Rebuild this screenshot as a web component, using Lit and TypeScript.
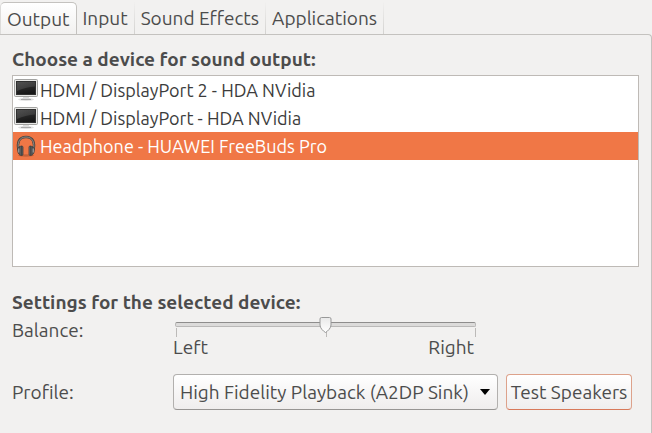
import { LitElement, html, css, svg } from "lit";
import { customElement, property, state } from "lit/decorators.js";
import { classMap } from "lit/directives/class-map.js";

@customElement("device-icon")
class DeviceIcon extends LitElement {
  @property() kind = "monitor";

  static styles = css`
    :host { display: block; width: 24px; height: 24px; flex: none; }
    svg { display: block; }
  `;

  render() {
    return html`<svg width="24" height="24" viewBox="0 0 24 24" aria-hidden="true">
      ${this.kind === "monitor" ? this.monitor() : this.headphones()}
    </svg>`;
  }

  monitor() {
    return svg`
      <defs>
        <linearGradient id="screen" x1="0" y1="0" x2="0.3" y2="1">
          <stop offset="0" stop-color="#3a3a3a"/><stop offset="1" stop-color="#181818"/>
        </linearGradient>
        <linearGradient id="shine" x1="0" y1="0" x2="1" y2="0.6">
          <stop offset="0" stop-color="#888" stop-opacity=".3"/><stop offset="1" stop-color="#888" stop-opacity=".2"/>
        </linearGradient>
      </defs>
      <ellipse cx="12" cy="21.5" rx="8" ry="1.5" fill="#000" opacity=".12"/>
      <path d="M9 18h6v2l1.500 1H7.500L9 20z" fill="#dcdcdc"/>
      <path d="M7 21h10v1H7z" fill="#a8a8a8"/>
      <rect x="0.5" y="1.5" width="23" height="17" rx="1" fill="#e8e8e6" stroke="#a2a2a0"/>
      <rect x="2.5" y="3.5" width="19" height="13" fill="url(#screen)" stroke="#303030"/>
      <path d="M3 4h18v4.500C14 9 9 10.500 3 13z" fill="url(#shine)"/>
    `;
  }

  headphones() {
    return svg`
      <defs>
        <linearGradient id="cup" x1="0" y1="0" x2="1" y2="0">
          <stop offset="0" stop-color="#888"/><stop offset=".5" stop-color="#484848"/><stop offset="1" stop-color="#707070"/>
        </linearGradient>
      </defs>
      <ellipse cx="12" cy="21.500" rx="8" ry="1.200" fill="#000" opacity=".18"/>
      <path d="M4.500 16C3 9 4.500 3 12 3s9 6 7.500 13" fill="none" stroke="#4c4540" stroke-width="2.400"/>
      <path d="M4.500 15C3.300 9 5 3 12 3s8.700 6 7.500 12" fill="none" stroke="#a39a92" stroke-width=".8"/>
      <path d="M6 12.500c-2 .5-2.600 2.500-2.300 4.500.3 2.500 1.300 4 3 4z" fill="#666" stroke="#333" stroke-width=".6"/>
      <path d="M18 12.500c2 .5 2.600 2.500 2.300 4.500-.3 2.500-1.300 4-3 4z" fill="#666" stroke="#333" stroke-width=".6"/>
      <rect x="6" y="12" width="3" height="9.500" rx="1.200" fill="url(#cup)" stroke="#383838" stroke-width=".7"/>
      <rect x="15" y="12" width="3" height="9.500" rx="1.200" fill="url(#cup)" stroke="#383838" stroke-width=".7"/>
      <path d="M4.800 14.500v4M19.200 14.500v4" stroke="#b0b0b0" stroke-width=".9"/>
    `;
  }
}

@customElement("app-root")
class AppRoot extends LitElement {
  @state() tab = 0;
  @state() device = 2;

  tabs = ["Output", "Input", "Sound Effects", "Applications"];
  devices = [
    { name: "HDMI / DisplayPort 2 - HDA NVidia", kind: "monitor" },
    { name: "HDMI / DisplayPort - HDA NVidia", kind: "monitor" },
    { name: "Headphone - HUAWEI FreeBuds Pro", kind: "headphones" },
  ];

  static styles = css`
    :host {
      display: flex;
      flex-direction: column;
      min-height: 100vh;
      box-sizing: border-box;
      padding-top: 2px;
      background: #f2f1f0;
      color: #4c4c4c;
      font: 19px/28px Ubuntu, "Noto Sans", sans-serif;
      white-space: nowrap;
    }
    * { box-sizing: border-box; }
    button, select { font: inherit; color: inherit; }
    .tabs { display: flex; height: 32px; }
    .tab {
      padding: 0 6px;
      border: 0;
      border-right: 1px solid;
      border-image: linear-gradient(#f2f1f0, #d2d1cf) 1;
      background: none;
    }
    .tab.active {
      border: 1px solid #c4c2bf;
      border-bottom: 0;
      border-left-color: #dddcda;
      border-image: none;
      border-radius: 5px 5px 0 0;
      background: linear-gradient(#fff, #f2f1f0);
    }
    .panel {
      flex: 1;
      border: 1px solid #c4c2bf;
      border-left: 0;
      border-bottom: 0;
      border-radius: 0 4px 0 0;
      padding: 10px 12px 0;
    }
    h2 { margin: 0; font: inherit; font-weight: 700; }
    .devices {
      list-style: none;
      margin: 2px 0 21px;
      padding: 0;
      height: 192px;
      background: #fff;
      border: 1px solid #bebab6;
      color: #3c3c3c;
      font-size: 18px;
    }
    .device { display: flex; align-items: center; gap: 2px; padding-left: 1px; height: 28px; }
    .device.selected { background: #f07746; color: #fff; }
    .settings { display: grid; grid-template-columns: 161px 1fr; align-items: start; }
    .scale { width: 301px; margin-left: 2px; }
    .slider {
      appearance: none;
      display: block;
      position: relative;
      width: 100%;
      height: 16px;
      margin: 0;
      background: none;
    }
    .slider::-webkit-slider-runnable-track {
      height: 5px;
      border: 1px solid #bab9b8;
      border-top-color: #8e8d8c;
      border-radius: 2px;
      background: #dcdbda;
    }
    .slider::-webkit-slider-thumb {
      appearance: none;
      width: 13px;
      height: 16px;
      margin-top: -6px;
      background: url("data:image/svg+xml,%3Csvg xmlns='http://www.w3.org/2000/svg' width='13' height='16'%3E%3Cdefs%3E%3ClinearGradient id='g' x2='0' y2='1'%3E%3Cstop stop-color='%23e9e9e9'/%3E%3Cstop offset='1' stop-color='%23ffffff'/%3E%3C/linearGradient%3E%3C/defs%3E%3Cpath d='M2.5.5h8q1.500 0 1.500 1.500v6c0 3-3 6-5.500 7.500C4 14 1 11 1 8V2q0-1.500 1.500-1.500z' fill='url(%23g)' stroke='%23989898'/%3E%3C/svg%3E") no-repeat;
    }
    .ticks { display: flex; justify-content: space-between; height: 9px; margin: -4px 0 0 1px; }
    .tick { width: 1px; background: #bcbab8; }
    .marks { display: flex; justify-content: space-between; width: 301px; line-height: 20px; }
    .control { padding-bottom: 17px; }
    .profile { display: flex; align-items: center; gap: 8px; height: 36px; }
    .profile-label { line-height: 36px; }
    .combo { position: relative; flex: 0 1 325px; }
    .combo select {
      appearance: none;
      display: block;
      width: 100%;
      height: 36px;
      padding: 0 24px 0 6px;
      border: 1px solid #b2b0ae;
      border-bottom-color: #979593;
      border-radius: 4px;
      background: linear-gradient(#fff, #efeded);
    }
    .arrow {
      position: absolute;
      right: 8px;
      top: 15px;
      width: 10px;
      height: 6px;
      background: #000;
      clip-path: polygon(0 0, 100% 0, 50% 100%);
      pointer-events: none;
    }
    .test {
      flex: 0 0 126px;
      height: 36px;
      padding: 0;
      border: 1px solid #dda28b;
      border-bottom-color: #d8795a;
      border-radius: 4px;
      background: linear-gradient(#fff, #efeded);
    }
  `;

  render() {
    return html`
      <div class="tabs" role="tablist">
        ${this.tabs.map((name, i) => html`<button role="tab" aria-selected=${i === this.tab}
          class=${classMap({ tab: true, active: i === this.tab })}
          @click=${() => (this.tab = i)}>${name}</button>`)}
      </div>
      <main class="panel" role="tabpanel">
        <h2 id="choose">Choose a device for sound output:</h2>
        <ul class="devices" role="listbox" aria-labelledby="choose">
          ${this.devices.map((d, i) => html`<li role="option" aria-selected=${i === this.device}
            class=${classMap({ device: true, selected: i === this.device })}
            @click=${() => (this.device = i)}><device-icon .kind=${d.kind}></device-icon><span>${d.name}</span></li>`)}
        </ul>
        <h2>Settings for the selected device:</h2>
        <div class="settings">
          <label for="balance">Balance:</label>
          <div class="control">
            <div class="scale">
              <input class="slider" id="balance" type="range" min="-100" max="100" value="0">
              <div class="ticks"><span class="tick"></span><span class="tick"></span><span class="tick"></span></div>
            </div>
            <div class="marks"><span>Left</span><span>Right</span></div>
          </div>
          <label class="profile-label" for="profile">Profile:</label>
          <div class="profile">
            <div class="combo">
              <select id="profile"><option>High Fidelity Playback (A2DP Sink)</option></select>
              <span class="arrow"></span>
            </div>
            <button class="test">Test Speakers</button>
          </div>
        </div>
      </main>
    `;
  }
}
